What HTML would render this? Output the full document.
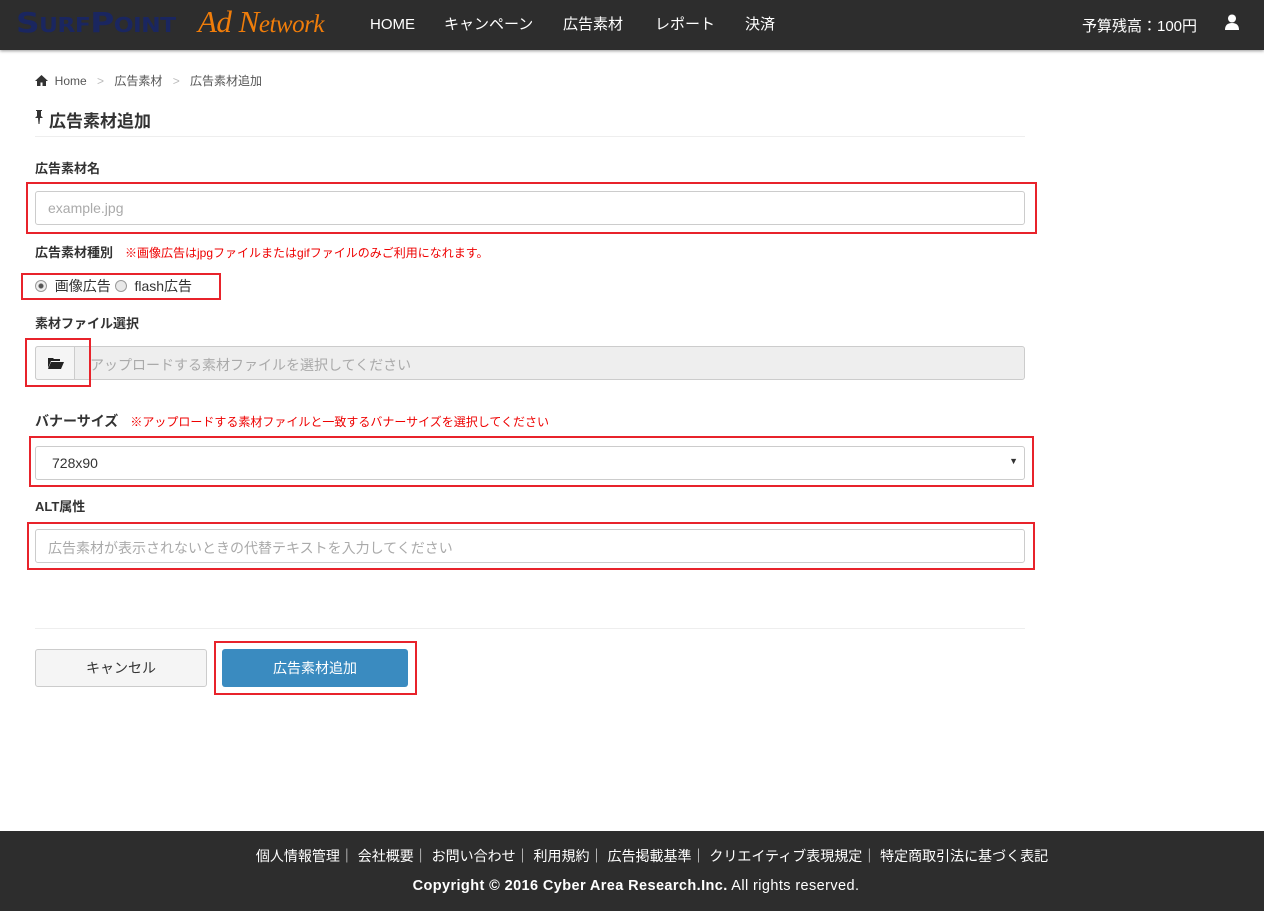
<!DOCTYPE html>
<html><head><meta charset="utf-8"><style>
*{box-sizing:border-box;margin:0;padding:0}
body{width:1264px;height:911px;background:#fff;font-family:"Liberation Sans","Noto Sans CJK JP",sans-serif;color:#333;font-size:14px;position:relative;overflow:hidden}
.hdr{position:absolute;left:0;top:0;width:1264px;height:50px;background:#2d2d2d;box-shadow:0 1px 3px rgba(0,0,0,.4)}
.sp{position:absolute;left:16px;top:6px;font-family:"DejaVu Sans","Liberation Sans",sans-serif;font-weight:bold;color:#1a2660;font-size:28px;letter-spacing:-0.5px;white-space:nowrap;transform:scaleX(1.17);transform-origin:left}
.sp small{font-size:20px}
.ad{position:absolute;left:198px;top:4px;font-family:"Liberation Serif",serif;font-style:italic;color:#f07d0a;font-size:31px;white-space:nowrap;letter-spacing:-0.5px}
.ad small{font-size:25px}
.nv{position:absolute;top:13px;color:#fff;font-size:15px}
.bud{position:absolute;left:1082px;top:15px;color:#fff;font-size:15px}
.usr{position:absolute;left:1225px;top:14px}
.lbl{position:absolute;left:35px;font-weight:bold;font-size:13px;color:#333}
.note{color:#e00;font-size:12px;font-weight:normal;margin-left:12px}
.inp{position:absolute;left:35px;width:990px;height:34px;border:1px solid #ccc;border-radius:3px;font-size:14px;color:#aaa;padding:8px 12px}
.red{position:absolute;border:2px solid #e8232b}
.ftr{position:absolute;left:0;top:831px;width:1264px;height:80px;background:#2d2d2d;color:#fff;text-align:center}
</style></head><body>
<div class="hdr">
 <div class="sp">S<small>URF</small>P<small>OINT</small></div><div class="ad">Ad N<small>etwork</small></div>
 <span class="nv" style="left:370px;top:16px">HOME</span><span class="nv" style="left:444px">キャンペーン</span><span class="nv" style="left:563px">広告素材</span><span class="nv" style="left:655px">レポート</span><span class="nv" style="left:745px">決済</span>
 <div class="bud">予算残高：100円</div>
 <svg class="usr" width="14" height="16" viewBox="0 0 14 16"><circle cx="7" cy="4.5" r="4" fill="#fff"/><path d="M0 16 Q0 9 7 9 Q14 9 14 16Z" fill="#fff"/></svg>
</div>
<div style="position:absolute;left:35px;top:72px;font-size:12px;color:#555">
<svg width="13" height="11" viewBox="0 0 13 11" style="vertical-align:-1px"><path d="M6.5 0L0 6h2v5h3.5V7.5h2V11H11V6h2z" fill="#333"/></svg>&nbsp; Home <span style="color:#bbb;margin:0 7px">&gt;</span> 広告素材 <span style="color:#bbb;margin:0 7px">&gt;</span> 広告素材追加</div>
<svg style="position:absolute;left:35px;top:110px" width="8" height="14" viewBox="0 0 8 14"><path d="M1 0h6v1H6v5l2 2H5l-.5 6h-1L3 8H0l2-2V1H1z" fill="#333"/></svg>
<div style="position:absolute;left:49px;top:107px;font-size:17px;font-weight:bold">広告素材追加</div>
<div style="position:absolute;left:35px;top:136px;width:990px;border-top:1px solid #eee"></div>
<div class="lbl" style="top:158px">広告素材名</div>
<div class="inp" style="top:191px">example.jpg</div>
<div class="red" style="left:26px;top:182px;width:1011px;height:52px"></div>
<div class="lbl" style="top:242px">広告素材種別<span class="note">※画像広告はjpgファイルまたはgifファイルのみご利用になれます。</span></div>
<div style="position:absolute;left:35px;top:276px;font-size:14px"><span style="display:inline-block;width:12px;height:12px;border:1px solid #999;border-radius:50%;background:radial-gradient(#555 2px,#eee 3px);vertical-align:-1px"></span>&nbsp; 画像広告 <span style="display:inline-block;width:12px;height:12px;border:1px solid #999;border-radius:50%;background:#e8e8e8;vertical-align:-1px"></span>&nbsp; flash広告</div>
<div class="red" style="left:21px;top:273px;width:200px;height:27px"></div>
<div class="lbl" style="top:313px">素材ファイル選択</div>
<div class="inp" style="top:346px;background:#eee;padding-left:54px;color:#aaa">アップロードする素材ファイルを選択してください</div>
<div style="position:absolute;left:35px;top:346px;width:40px;height:34px;border:1px solid #ccc;background:#f5f5f5;border-radius:3px 0 0 3px"><svg style="position:absolute;left:12px;top:10px" width="16" height="12" viewBox="0 0 16 12"><path d="M0 1h5l1 1h6v2H3L0 11z M3 5h13l-3 7H0z" fill="#222"/></svg></div>
<div class="red" style="left:25px;top:338px;width:66px;height:49px"></div>
<div class="lbl" style="top:411px;font-size:14px">バナーサイズ<span class="note">※アップロードする素材ファイルと一致するバナーサイズを選択してください</span></div>
<div class="inp" style="top:446px;color:#333;padding-left:16px">728x90<span style="position:absolute;right:6px;top:9px;font-size:9px">▼</span></div>
<div class="red" style="left:29px;top:436px;width:1005px;height:51px"></div>
<div class="lbl" style="top:496px">ALT属性</div>
<div class="inp" style="top:529px">広告素材が表示されないときの代替テキストを入力してください</div>
<div class="red" style="left:27px;top:522px;width:1008px;height:48px"></div>
<div style="position:absolute;left:35px;top:628px;width:990px;border-top:1px solid #eee"></div>
<div style="position:absolute;left:35px;top:649px;width:172px;height:38px;border:1px solid #ccc;background:#f5f5f5;border-radius:3px;text-align:center;line-height:36px;font-size:14px">キャンセル</div>
<div style="position:absolute;left:222px;top:649px;width:186px;height:38px;background:#3a8bc0;border-radius:3px;text-align:center;line-height:38px;font-size:14px;color:#fff">広告素材追加</div>
<div class="red" style="left:214px;top:641px;width:203px;height:54px"></div>
<div class="ftr"><div style="margin-top:15px;font-size:14px;padding-left:40px">個人情報管理｜ 会社概要｜ お問い合わせ｜ 利用規約｜ 広告掲載基準｜ クリエイティブ表現規定｜ 特定商取引法に基づく表記</div>
<div style="margin-top:12px;font-size:14.5px;letter-spacing:0.4px;padding-left:8px"><b>Copyright © 2016 Cyber Area Research.Inc.</b> All rights reserved.</div></div>
</body></html>
